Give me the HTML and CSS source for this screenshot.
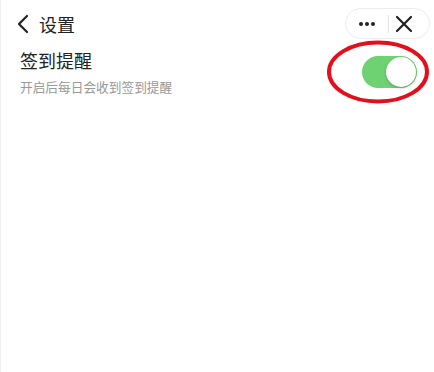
FILE: index.html
```html
<!DOCTYPE html>
<html lang="zh">
<head>
<meta charset="utf-8">
<link rel="stylesheet" href="styles.css">
</head>
<body>
<div class="page">
  <header class="nav">
    <div class="nav-left">
      <svg class="back" width="12" height="20" viewBox="0 0 12 20"><path d="M10 2 L2 10 L10 18" fill="none" stroke="#222" stroke-width="2.2" stroke-linecap="round" stroke-linejoin="round"/></svg>
      <span class="nav-title">设置</span>
    </div>
    <div class="capsule">
      <svg class="dots" width="18" height="6" viewBox="0 0 18 6"><circle cx="3" cy="3" r="2" fill="#222"/><circle cx="9" cy="3" r="2" fill="#222"/><circle cx="15" cy="3" r="2" fill="#222"/></svg>
      <span class="cap-div"></span>
      <svg class="close" width="18" height="18" viewBox="0 0 18 18"><path d="M2 2 L16 16 M16 2 L2 16" stroke="#222" stroke-width="2.2" stroke-linecap="round"/></svg>
    </div>
  </header>
  <section class="row">
    <div class="row-text">
      <div class="row-title">签到提醒</div>
      <div class="row-desc">开启后每日会收到签到提醒</div>
    </div>
    <div class="switch-wrap">
      <div class="switch"><span class="knob"></span></div>
      <svg class="circle" width="106" height="68" viewBox="0 0 106 68"><ellipse cx="53" cy="34" rx="49" ry="29.5" fill="none" stroke="#e3101b" stroke-width="4"/></svg>
    </div>
  </section>
</div>
</body>
</html>
```
FILE: styles.css
```css
html, body {
  margin: 0;
  padding: 0;
  background: #fff;
}
body {
  font-family: "Noto Sans CJK SC", "Noto Sans", sans-serif;
  width: 434px;
  height: 372px;
  overflow: hidden;
}
.page {
  width: 434px;
  height: 372px;
  border-left: 1px solid #efefef;
  box-sizing: border-box;
}
.nav {
  display: flex;
  align-items: center;
  justify-content: space-between;
  height: 31px;
  padding: 8px 4px 0 16px;
}
.nav-left {
  display: flex;
  align-items: center;
  gap: 10px;
}
.back {
  display: block;
}
.nav-title {
  font-size: 18px;
  color: #222;
  line-height: 20px;
}
.capsule {
  display: flex;
  align-items: center;
  height: 31px;
  width: 85px;
  box-sizing: border-box;
  border: 1px solid #ececec;
  border-radius: 16px;
  padding: 0 0 0 12px;
}
.dots { display: block; }
.cap-div {
  width: 1px;
  height: 18px;
  background: #e2e2e2;
  margin: 0 6px 0 12px;
}
.close { display: block; }
.row {
  display: flex;
  justify-content: space-between;
  align-items: flex-start;
  padding: 9px 3px 0 19px;
}
.row-title {
  font-size: 18px;
  line-height: 24px;
  color: #222;
}
.row-desc {
  font-size: 12.7px;
  line-height: 18px;
  color: #999;
  margin-top: 6px;
}
.switch-wrap {
  position: relative;
  width: 106px;
  height: 68px;
  margin-top: -10px;
}
.switch {
  position: absolute;
  left: 37px;
  top: 18px;
  width: 55px;
  height: 32px;
  border-radius: 16px;
  background: #6fd272;
}
.knob {
  position: absolute;
  right: 1px;
  top: 1px;
  width: 30px;
  height: 30px;
  border-radius: 50%;
  background: #fff;
  box-shadow: 0 1px 3px rgba(0,0,0,0.25);
}
.circle {
  position: absolute;
  left: 0;
  top: 0;
}
```
